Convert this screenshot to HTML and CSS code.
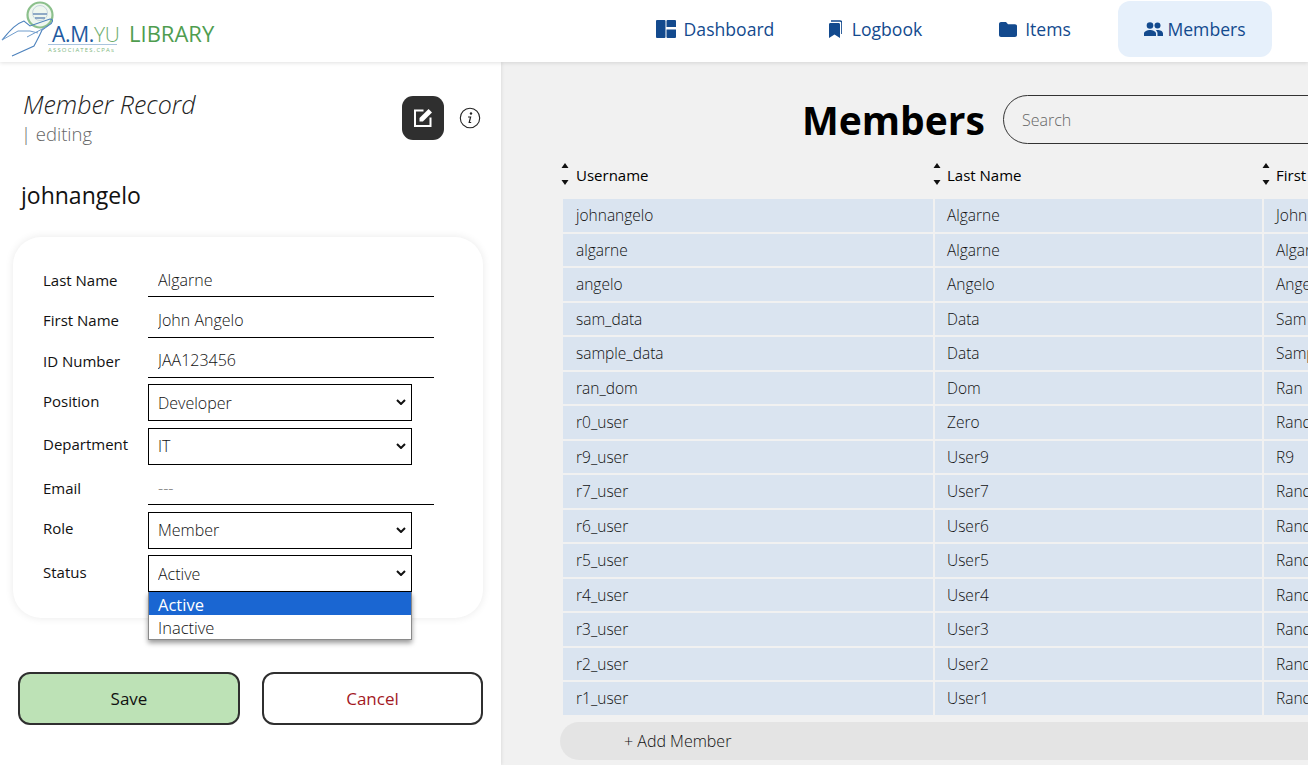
FILE: index.html
```html
<!DOCTYPE html>
<html lang="en">
<head>
<meta charset="utf-8">
<title>A.M.YU Library - Members</title>
<link rel="stylesheet" href="styles.css">
</head>
<body>
<header class="topbar">
  <div class="brand">
    <div class="logo">
      <svg class="logo-art" width="120" height="62" viewBox="0 0 120 62" aria-hidden="true">
        <circle cx="40" cy="15" r="12.500" fill="#eef6ee" stroke="#8cc08c" stroke-width="2.200"/>
        <circle cx="40" cy="13" r="7.500" fill="none" stroke="#c5d5de" stroke-width="1"/>
        <path d="M33 14h14M35 18h10" stroke="#6f90b8" stroke-width="1.500"/>
        <path d="M2 40 C9 32 15 24 24 21 L30 26 L50 19 C54 19 53 23 49 25 L42 30 C40 35 36 42 34 46 L12 56" fill="none" stroke="#4d82bd" stroke-width="1.100"/>
        <path d="M2 40 L18 31 L30 31 L38 33 M27 37 L46 27" fill="none" stroke="#6f9ccc" stroke-width="1"/>
        <path d="M48 44.500H117" stroke="#a9c4de" stroke-width="1"/>
      </svg>
      <span class="logo-name"><span class="logo-am">A.M.</span><span class="logo-yu">YU</span></span>
      <span class="logo-sub">ASSOCIATES,CPAs</span>
    </div>
    <span class="brand-lib">LIBRARY</span>
  </div>
  <nav class="nav">
    <a class="nav-item">
      <svg width="20" height="18" viewBox="0 0 20 18"><path d="M1 0h7.500a1 1 0 0 1 1 1v16a1 1 0 0 1-1 1H1a1 1 0 0 1-1-1V1a1 1 0 0 1 1-1zM11.500 0H19a1 1 0 0 1 1 1v6H10.500V1a1 1 0 0 1 1-1zM10.500 9.500H20V17a1 1 0 0 1-1 1h-7.500a1 1 0 0 1-1-1z" fill="#134a8e"/></svg>
      <span>Dashboard</span>
    </a>
    <a class="nav-item nav-item-wide">
      <svg width="14" height="18" viewBox="0 0 14 18"><path d="M1 4.500c0-1 .6-1.500 1.500-1.500h8c.9 0 1.500.5 1.500 1.500V18l-5.500-3.500L1 18z" fill="#134a8e"/><path d="M3 1h9c1 0 1.800.6 1.800 1.600V14" fill="none" stroke="#134a8e" stroke-width="1.300"/></svg>
      <span>Logbook</span>
    </a>
    <a class="nav-item">
      <svg width="18" height="15" viewBox="0 0 18 15"><path d="M2 0h5l2 2.200h7c1.100 0 2 .8 2 1.800v9c0 1.100-.9 2-2 2H2c-1.100 0-2-.9-2-2V2C0 .9.900 0 2 0z" fill="#134a8e"/></svg>
      <span>Items</span>
    </a>
    <a class="nav-item nav-item-active">
      <svg width="19" height="14" viewBox="0 0 19 14"><circle cx="6" cy="3.500" r="3.300" fill="#134a8e"/><circle cx="13.500" cy="3.500" r="3" fill="#134a8e"/><path d="M0 14v-2.500C0 9.300 3.500 8 6 8s6 1.300 6 3.500V14zM13.500 14v-2.500c0-1.300-.6-2.400-1.600-3.200.6-.2 1.200-.3 1.700-.3 2.200 0 5.400 1.100 5.400 3.500V14z" fill="#134a8e"/></svg>
      <span>Members</span>
    </a>
  </nav>
</header>

<main class="main">
  <aside class="record">
    <div class="record-head">
      <div class="record-titles">
        <h2 class="record-title">Member Record</h2>
        <div class="record-mode">| editing</div>
      </div>
      <button class="edit-btn" type="button" aria-label="Edit">
        <svg width="22" height="22" viewBox="0 0 22 22"><path d="M11.500 3.500H3v15.500h15.500V10.500" fill="none" stroke="#fff" stroke-width="2"/><path d="M7.500 14.500v-3.400L16.600 2l3.400 3.400-9.100 9.100z" fill="#fff"/></svg>
      </button>
      <svg class="info-icon" width="22" height="22" viewBox="0 0 22 22" aria-label="Info"><circle cx="11" cy="11" r="9.700" fill="none" stroke="#222" stroke-width="1.100"/><circle cx="12" cy="6.500" r="1.200" fill="#222"/><path d="M9 10h2.600l-1.400 5.500h2" fill="none" stroke="#222" stroke-width="1.200"/></svg>
    </div>
    <h3 class="record-user">johnangelo</h3>

    <form class="card">
      <div class="row row-input"><label class="lbl">Last Name</label><input class="field" value="Algarne"></div>
      <div class="row row-input"><label class="lbl">First Name</label><input class="field" value="John Angelo"></div>
      <div class="row row-input"><label class="lbl">ID Number</label><input class="field" value="JAA123456"></div>
      <div class="row row-select"><label class="lbl">Position</label><span class="pick-wrap"><select class="pick"><option>Developer</option></select><svg class="chev" width="10" height="6" viewBox="0 0 10 6"><path d="M1 1l4 4 4-4" fill="none" stroke="#111" stroke-width="2"/></svg></span></div>
      <div class="row row-select"><label class="lbl">Department</label><span class="pick-wrap"><select class="pick"><option>IT</option></select><svg class="chev" width="10" height="6" viewBox="0 0 10 6"><path d="M1 1l4 4 4-4" fill="none" stroke="#111" stroke-width="2"/></svg></span></div>
      <div class="row row-input"><label class="lbl">Email</label><input class="field field-empty" value="---"></div>
      <div class="row row-select"><label class="lbl">Role</label><span class="pick-wrap"><select class="pick"><option>Member</option></select><svg class="chev" width="10" height="6" viewBox="0 0 10 6"><path d="M1 1l4 4 4-4" fill="none" stroke="#111" stroke-width="2"/></svg></span></div>
      <div class="row row-select row-status">
        <label class="lbl">Status</label><span class="pick-wrap"><select class="pick"><option>Active</option></select><svg class="chev" width="10" height="6" viewBox="0 0 10 6"><path d="M1 1l4 4 4-4" fill="none" stroke="#111" stroke-width="2"/></svg></span>
        <ul class="menu">
          <li class="menu-item menu-item-on">Active</li>
          <li class="menu-item">Inactive</li>
        </ul>
      </div>
    </form>

    <div class="actions">
      <button class="btn btn-save" type="button">Save</button>
      <button class="btn btn-cancel" type="button">Cancel</button>
    </div>
  </aside>

  <section class="list">
    <div class="list-head">
      <h1 class="list-title">Members</h1>
      <input class="search" placeholder="Search">
    </div>
    <table class="grid">
      <colgroup><col class="col-a"><col class="col-b"><col class="col-c"></colgroup>
      <thead>
        <tr>
          <th><svg class="sort" width="8" height="24" viewBox="0 0 8 24"><path d="M4 1l3.500 5H.5zM4 23l3.500-5H.5z" fill="#111"/></svg><span class="th-text">Username</span></th>
          <th><svg class="sort" width="8" height="24" viewBox="0 0 8 24"><path d="M4 1l3.500 5H.5zM4 23l3.500-5H.5z" fill="#111"/></svg><span class="th-text">Last Name</span></th>
          <th><svg class="sort" width="8" height="24" viewBox="0 0 8 24"><path d="M4 1l3.500 5H.5zM4 23l3.500-5H.5z" fill="#111"/></svg><span class="th-text">First Name</span></th>
        </tr>
      </thead>
      <tbody>
        <tr><td>johnangelo</td><td>Algarne</td><td>John Angelo</td></tr>
        <tr><td>algarne</td><td>Algarne</td><td>Algarne</td></tr>
        <tr><td>angelo</td><td>Angelo</td><td>Angelo</td></tr>
        <tr><td>sam_data</td><td>Data</td><td>Sam</td></tr>
        <tr><td>sample_data</td><td>Data</td><td>Sample</td></tr>
        <tr><td>ran_dom</td><td>Dom</td><td>Ran</td></tr>
        <tr><td>r0_user</td><td>Zero</td><td>Random</td></tr>
        <tr><td>r9_user</td><td>User9</td><td>R9</td></tr>
        <tr><td>r7_user</td><td>User7</td><td>Random</td></tr>
        <tr><td>r6_user</td><td>User6</td><td>Random</td></tr>
        <tr><td>r5_user</td><td>User5</td><td>Random</td></tr>
        <tr><td>r4_user</td><td>User4</td><td>Random</td></tr>
        <tr><td>r3_user</td><td>User3</td><td>Random</td></tr>
        <tr><td>r2_user</td><td>User2</td><td>Random</td></tr>
        <tr><td>r1_user</td><td>User1</td><td>Random</td></tr>
      </tbody>
    </table>
    <div class="add-bar">+ Add Member</div>
  </section>
</main>
</body>
</html>
```
FILE: styles.css
```css
* { box-sizing: border-box; }
html, body { margin: 0; height: 100%; overflow: hidden; }
body {
  width: 1308px;
  height: 765px;
  font-family: "Open Sans", "Liberation Sans", sans-serif;
  font-size: 14px;
  color: #222;
  background: #f1f1f1;
  display: flex;
  flex-direction: column;
}

/* top bar */
.topbar {
  height: 62px;
  flex: none;
  background: #fff;
  display: flex;
  justify-content: space-between;
  box-shadow: 0 1px 4px rgba(0,0,0,.12);
  position: relative;
  z-index: 2;
}
.brand { display: flex; align-items: center; }
.logo { position: relative; width: 129px; height: 62px; }
.logo-art { position: absolute; left: 0; top: 0; }
.logo-name {
  position: absolute; left: 52px; top: 21px;
  font-size: 21px; line-height: 26px; letter-spacing: -.3px; white-space: nowrap;
}
.logo-am { color: #1f5aa0; }
.logo-yu { color: #6fae6f; font-weight: 300; }
.logo-sub {
  position: absolute; left: 48px; top: 46px;
  font-size: 6px; line-height: 8px; letter-spacing: 1.150px; color: #7fb87f; white-space: nowrap;
}
.brand-lib { font-size: 22px; font-weight: 500; color: #4f9d4f; line-height: 1; margin-bottom: -4px; }
.nav { display: flex; gap: 6px; padding: 1px 36px 0 0; height: 57px; }
.nav-item {
  width: 154px;
  height: 56px;
  border-radius: 12px;
  display: flex;
  align-items: center;
  justify-content: center;
  gap: 8px;
  font-size: 17.600px;
  color: #134a8e;
}
.nav-item-wide { gap: 10px; }
.nav-item-active { background: #e6f0fb; gap: 4px; }

/* main */
.main { flex: 1; display: flex; min-height: 0; }

/* left record */
.record {
  width: 501px;
  flex: none;
  background: #fff;
  padding: 29px 18px 0 13px;
  box-shadow: 1px 0 3px rgba(0,0,0,.08);
  position: relative;
  z-index: 1;
}
.record-head { display: flex; align-items: flex-start; padding-left: 10px; }
.record-titles { flex: 1; }
.record-title { margin: 0; font-size: 25px; line-height: 27px; font-weight: 300; font-style: italic; color: #222; }
.record-mode { margin: 1px 0 0 -2px; font-size: 18.500px; line-height: 29px; font-weight: 300; color: #666; }
.edit-btn {
  width: 42px; height: 44px; margin-top: 5px; padding: 0;
  border: 0; border-radius: 11px; background: #2f2f2f;
  display: flex; align-items: center; justify-content: center;
}
.info-icon { margin: 16px 2px 0 15px; }
.record-user { margin: 32px 0 27px 8px; font-size: 23px; line-height: 30px; font-weight: 400; color: #111; }

.card {
  width: 470px;
  height: 381px;
  padding: 20px 49px 0 30px;
  background: #fff;
  border-radius: 28px;
  box-shadow: 0 0 8px rgba(0,0,0,.09);
}
.row { display: flex; align-items: center; position: relative; }
.row-input { height: 40.300px; }
.row-select { height: 43.500px; padding-top: 6.500px; }
.lbl { width: 105px; flex: none; font-size: 15px; color: #111; }
.row-input .lbl { padding-top: 6px; }
.row-select .lbl { padding-bottom: 4px; }
.field {
  width: 286px;
  height: 100%;
  padding: 6px 0 0 10px;
  border: 0;
  border-bottom: 1px solid #000;
  outline: 0;
  font: 300 16px "Open Sans", sans-serif;
  color: #111;
  background: transparent;
}
.field-empty { color: #777; }
.pick-wrap { position: relative; display: block; width: 264px; height: 37px; }
.pick {
  display: block;
  width: 264px;
  height: 37px;
  padding-left: 9px;
  border: 1px solid #000;
  border-radius: 0;
  appearance: none;
  background-color: #fff;
  font: 300 16px "Open Sans", sans-serif;
  color: #111;
}
.chev { position: absolute; right: 6px; top: 15px; pointer-events: none; }
.menu {
  position: absolute;
  left: 105px; top: 43.500px;
  width: 264px;
  margin: 0; padding: 0 0 1px;
  list-style: none;
  background: #fff;
  border: 1px solid #8a8a8a;
  border-top: 0;
  box-shadow: 0 3px 5px rgba(0,0,0,.4);
}
.menu-item { height: 23px; line-height: 25px; padding-left: 9px; font-size: 16.500px; font-weight: 300; color: #111; }
.menu-item-on { background: #1a66d2; color: #fff; font-weight: 400; }

.actions { display: flex; gap: 22px; margin: 54px 0 0 5px; }
.btn {
  width: 222px; height: 53px;
  border: 2px solid #2f2f2f; border-radius: 12px;
  font: 400 17px "Open Sans", sans-serif;
  cursor: pointer;
}
.btn-save { background: #bde2b6; color: #111; }
.btn-cancel { width: 221px; background: #fff; color: #a3191f; }

/* right list */
.list { flex: 1; min-width: 0; overflow: hidden; padding: 33px 0 0 60px; background: #f1f1f1; }
.list-head { display: flex; align-items: center; height: 49px; width: 900px; padding-left: 241px; gap: 18px; }
.list-title { margin: 0; flex: none; font-size: 39px; line-height: 49px; font-weight: 700; color: #000; }
.search {
  width: 500px; height: 49px; flex: none;
  padding: 0 0 0 18px;
  border: 1px solid #333; border-radius: 25px;
  background: transparent; outline: 0;
  font: 300 16px "Open Sans", sans-serif;
}
.search::placeholder { color: #666; }
.grid { border-collapse: separate; border-spacing: 2px; width: 1000px; table-layout: fixed; margin-top: 8px; }
.col-a { width: 370px; }
.col-b { width: 327px; }
.col-c { width: 303px; }
.grid th {
  height: 43px; padding: 0 0 2px 13px;
  text-align: left; font-size: 15px; font-weight: 400; color: #000;
  position: relative; white-space: nowrap;
}
.grid th:nth-child(n+2), .grid td:nth-child(n+2) { padding-left: 12px; }
.sort { position: absolute; left: -2px; top: 8px; }
.grid td {
  height: 32.500px; padding: 0 0 0 13px;
  background: #dae4f0;
  font-size: 15.500px; font-weight: 300; color: #111; white-space: nowrap; overflow: hidden;
}
.add-bar {
  width: 900px; height: 38px; margin: 5px 0 0 -1px; padding-left: 64px;
  border-radius: 19px; background: #e4e4e4;
  font-size: 16px; font-weight: 300; line-height: 38px; color: #111;
}
```
